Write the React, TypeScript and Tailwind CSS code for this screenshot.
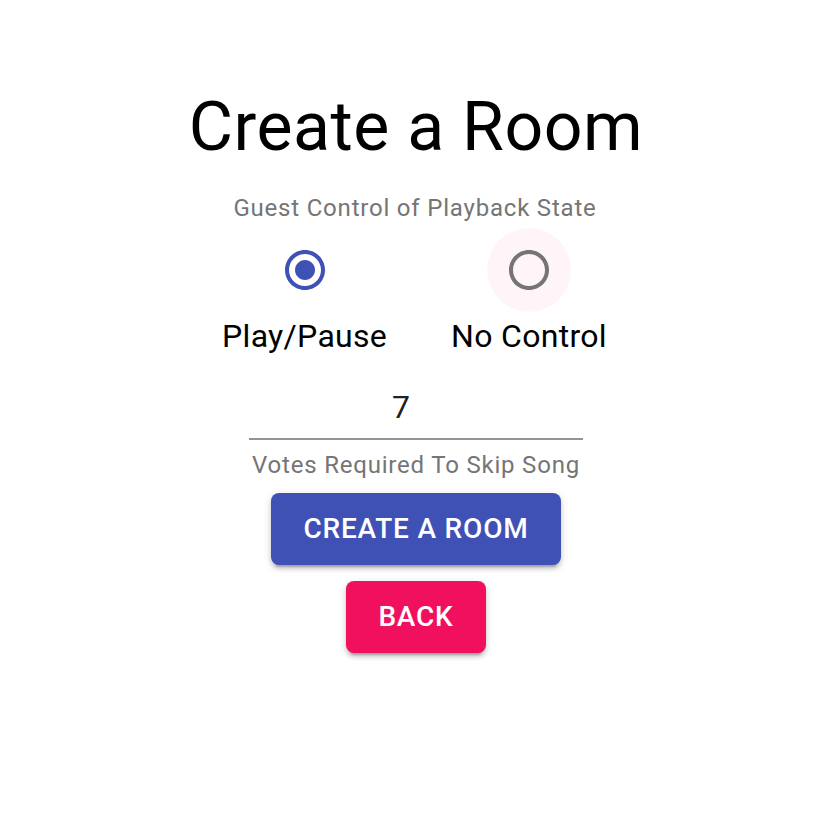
import { useState } from "react";

const RADIO_OUTER =
  "M12 2C6.48 2 2 6.48 2 12s4.48 10 10 10 10-4.48 10-10S17.52 2 12 2zm0 18c-4.42 0-8-3.58-8-8s3.58-8 8-8 8 3.58 8 8-3.58 8-8 8z";
const RADIO_DOT =
  "M12 7c-2.76 0-5 2.24-5 5s2.24 5 5 5 5-2.24 5-5-2.24-5-5-5z";

type RadioProps = {
  label: string;
  checked: boolean;
  hovered?: boolean;
  onSelect: () => void;
};

const RadioOption = ({ label, checked, hovered, onSelect }: RadioProps) => {
  return (
    <label
      className="flex flex-col items-center cursor-pointer"
      onClick={onSelect}
    >
      <span
        className={`flex h-[84px] w-[84px] items-center justify-center rounded-full ${
          hovered ? "bg-[rgba(245,0,87,0.04)]" : ""
        }`}
      >
        <svg
          viewBox="0 0 24 24"
          className={`h-[48px] w-[48px] ${
            checked ? "fill-[#3f51b5]" : "fill-[#757575]"
          }`}
        >
          <path d={RADIO_OUTER} />
          {checked && <path d={RADIO_DOT} />}
        </svg>
      </span>
      <span className="text-[32px] leading-[48px] tracking-[0.3px] text-black">
        {label}
      </span>
    </label>
  );
};

const App = () => {
  const [control, setControl] = useState("true");
  const [votes, setVotes] = useState("7");

  return (
    <div className="min-h-[820px] bg-white font-['Roboto','Liberation_Sans',sans-serif]">
      <div className="flex flex-col items-center pt-[85px]">
        <h4 className="text-[68px] leading-[84px] tracking-[0.5px] font-normal text-black">
          Create a Room
        </h4>

        <div className="mt-[20px] pr-[2px] text-[24px] leading-[39px] tracking-[0.8px] text-[#757575]">
          Guest Control of Playback State
        </div>

        {/* playback control radios */}
        <div className="flex gap-[64px] pr-[3px]">
          <RadioOption
            label="Play/Pause"
            checked={control === "true"}
            onSelect={() => setControl("true")}
          />
          <RadioOption
            label="No Control"
            checked={control === "false"}
            hovered
            onSelect={() => setControl("false")}
          />
        </div>

        {/* votes to skip */}
        <div className="mt-[16px] flex w-[334px] flex-col items-center">
          <input
            type="number"
            value={votes}
            onChange={(e) => setVotes(e.target.value)}
            className="h-[64px] w-full border-b-2 border-[#949494] bg-transparent pt-[12px] pr-[30px] pb-[12px] text-center text-[32px] leading-[38px] text-[#212121] outline-none [appearance:textfield] [&::-webkit-inner-spin-button]:appearance-none [&::-webkit-outer-spin-button]:appearance-none"
          />
          <div className="mt-[5px] text-[24px] leading-[40px] tracking-[0.8px] text-[#757575]">
            Votes Required To Skip Song
          </div>
        </div>

        <button className="mt-[8px] h-[72px] rounded-[8px] bg-[#3f51b5] px-[32px] text-[28px] font-medium uppercase tracking-[0.8px] text-white shadow-[0_6px_2px_-4px_rgba(0,0,0,0.2),0_4px_4px_0_rgba(0,0,0,0.14),0_2px_10px_0_rgba(0,0,0,0.12)]">
          Create a Room
        </button>

        <button className="mt-[16px] h-[72px] rounded-[8px] bg-[#f0105e] px-[32px] text-[28px] font-medium uppercase tracking-[0.8px] text-white shadow-[0_6px_2px_-4px_rgba(0,0,0,0.2),0_4px_4px_0_rgba(0,0,0,0.14),0_2px_10px_0_rgba(0,0,0,0.12)]">
          Back
        </button>
      </div>
    </div>
  );
};

export default App;
